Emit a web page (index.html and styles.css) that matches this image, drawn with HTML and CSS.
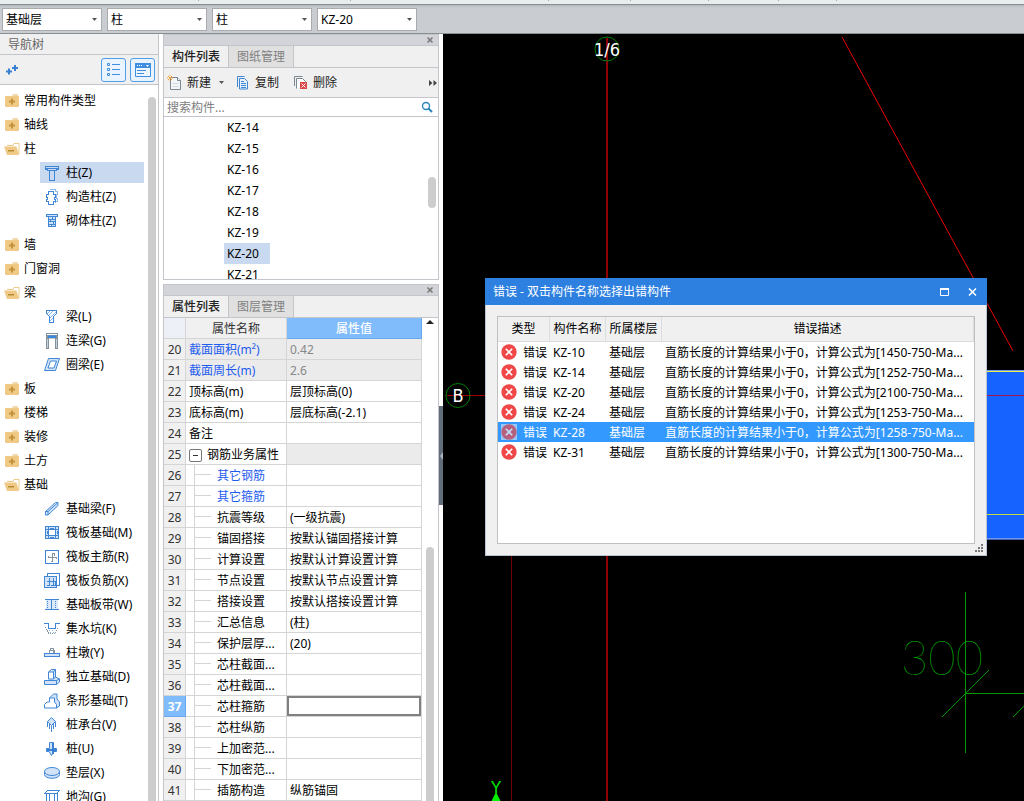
FILE: index.html
```html
<!DOCTYPE html>
<html lang="zh-CN">
<head>
<meta charset="utf-8">
<meta name="viewport" content="width=device-width, initial-scale=1">
<title>构件建模</title>
<link rel="stylesheet" href="styles.css">
</head>
<body>
<svg class="sprite" aria-hidden="true">
  <symbol id="closed" viewBox="0 0 16 16"><path d="M8 3l1-2h5v3H8z" fill="#f3d9a6"/><rect x="1" y="3" width="14" height="11" rx="1" fill="#f0c987"/><path d="M7 5.500h2v2h2v2h-2v2H7v-2H5v-2h2z" fill="#c4933c"/></symbol>
  <symbol id="open" viewBox="0 0 16 16"><path d="M3 4.500h6l1-2h5V13" fill="none" stroke="#f0c987"/><path d="M0 5.500h12.500l2.500 8.500H3z" fill="#f0c987"/><path d="M4 9h6v1.500H4z" fill="#b98a38"/></symbol>
  <symbol id="caret" viewBox="0 0 5 3"><path d="M0 0h5L2.500 3z" fill="#555"/></symbol>
  <symbol id="x" viewBox="0 0 8 8"><path d="M1.500 1.500l5 5M6.500 1.500l-5 5" stroke="#777" stroke-width="1.500"/></symbol>
  <symbol id="error" viewBox="0 0 16 16"><circle cx="8" cy="8" r="7.700" fill="#f04848"/><path d="M4.800 4.800l6.400 6.400M11.200 4.800l-6.400 6.400" stroke="#fff" stroke-width="1.600"/></symbol>
</svg>

<header>
  <svg class="ribbon" aria-hidden="true"><path d="M198.500 0v1M350.500 0v1M548.500 0v1M630.500 0v1M708.500 0v1M778.500 0v1M836.500 0v1" stroke="#a6adb2"/></svg>
  <div class="selectors">
    <label class="combo"><select aria-label="楼层"><option>基础层</option></select><svg><use href="#caret"/></svg></label>
    <label class="combo"><select aria-label="构件分类"><option>柱</option></select><svg><use href="#caret"/></svg></label>
    <label class="combo"><select aria-label="构件类型"><option>柱</option></select><svg><use href="#caret"/></svg></label>
    <label class="combo"><select aria-label="构件名称"><option>KZ-20</option></select><svg><use href="#caret"/></svg></label>
  </div>
</header>

<main class="workspace">
  <nav class="nav" aria-label="导航树">
    <h2>导航树</h2>
    <div class="nav-tools">
      <button class="plain" aria-label="添加"><svg width="14" height="12" viewBox="0 0 14 12"><path d="M3 4.500v6M0 7.500h6M9 1v6M6 4h6" stroke="#3a80d2" stroke-width="2"/></svg></button>
      <button class="view" aria-label="列表视图"><svg width="14" height="14" viewBox="0 0 14 14" fill="none" stroke="#3f8fe0"><path d="M.5.500h2v2h-2zM.5 5.500h2v2h-2zM.5 10.500h2v2h-2zM5 1.500h8M5 6.500h8M5 11.500h8"/></svg></button>
      <button class="view" aria-label="面板视图"><svg width="16" height="14" viewBox="0 0 16 14"><path d="M.5.500h15v13H.500z" fill="#eef6ff" stroke="#3f8fe0"/><path d="M0 0h16v5H0z" fill="#3f8fe0"/><path d="M2 2h1v1H2zM4 2h1v1H4zM6 2h1v1H6zM11 2h3l-1.500 2z" fill="#fff"/><path d="M2 7.500h9M2 10.500h7" stroke="#3f8fe0"/></svg></button>
    </div>
    <div class="tree-wrap">
    <ul class="tree">
      <li><button><svg><use href="#closed"/></svg>常用构件类型</button></li>
      <li><button><svg><use href="#closed"/></svg>轴线</button></li>
      <li><button><svg><use href="#open"/></svg>柱</button>
        <ul>
          <li><button class="selected"><svg viewBox="0 0 16 16"><path d="M1.500 1.500h13v3h-2v1h-9v-1h-2zM1.500 3.500h13M5.500 5.500v10h5v-10" class="l"/></svg>柱(Z)</button></li>
          <li><button><svg viewBox="0 0 16 16"><path d="M6 .5h5.500v2h2v3h-1v4h1v3h-2v1" class="l pale"/><path d="M4.500 2.500h5v3h2v3h-1v2h1v2h-2v3h-5v-3h-2v-2h1v-2h-1v-3h2z" class="l w"/></svg>构造柱(Z)</button></li>
          <li><button><svg viewBox="0 0 16 16"><path d="M2.500 1.500h11v2h-11zM4.500 3.500h7v10h-7zM4.500 6h7M4.500 8.500h7M4.500 11h7M8 3.500V6M6.500 6v2.500M9.500 8.500V11M7 11v2.500" class="l f"/></svg>砌体柱(Z)</button></li>
        </ul></li>
      <li><button><svg><use href="#closed"/></svg>墙</button></li>
      <li><button><svg><use href="#closed"/></svg>门窗洞</button></li>
      <li><button><svg><use href="#open"/></svg>梁</button>
        <ul>
          <li><button><svg viewBox="0 0 16 16"><path d="M2.500 1.500h10v3l-3 3v6h-4v-6l-3-3z" class="l w"/><path d="M3 5l3-3M5 6l4-4M6 9l6-6M6 12l3-3" class="l pale"/></svg>梁(L)</button></li>
          <li><button><svg viewBox="0 0 16 16"><path d="M2 0h12v16h-3V5.500H5V16H2z" fill="#84929e"/><path d="M3 1h10v1H3z" fill="#fff"/><path d="M4 2.500h8v2.500H4z" fill="#3d87da"/><path d="M3.500 6v9M12.500 6v9" stroke="#c8d1d8"/></svg>连梁(G)</button></li>
          <li><button><svg viewBox="0 0 16 16"><path d="M4.500 1.500h11l-4 12H.500zM6.500 4h6l-2.500 7H4z" class="d f" fill-rule="evenodd"/></svg>圈梁(E)</button></li>
        </ul></li>
      <li><button><svg><use href="#closed"/></svg>板</button></li>
      <li><button><svg><use href="#closed"/></svg>楼梯</button></li>
      <li><button><svg><use href="#closed"/></svg>装修</button></li>
      <li><button><svg><use href="#closed"/></svg>土方</button></li>
      <li><button><svg><use href="#open"/></svg>基础</button>
        <ul>
          <li><button><svg viewBox="0 0 16 16"><path d="M1.500 10.500l10-9h2.500v3l-10 9.500H1.500zM1.500 10.500H4V14M4 10.500L13.500 2" class="d f"/></svg>基础梁(F)</button></li>
          <li><button><svg viewBox="0 0 16 16"><path d="M1.500 1.500h13v12h-13z" class="l f"/><path d="M4.500 4.500h7v6h-7z" class="l w"/><path d="M1.500 4.500h3v-3M11.500 1.500v3h3M1.500 10.500h3v3M11.500 13.500v-3h3M3 6v3M13 6v3M6 3h4M6 12h4" class="l"/></svg>筏板基础(M)</button></li>
          <li><button><svg viewBox="0 0 16 16"><path d="M1.500 1.500h13v13h-13z" class="l"/><path d="M8.500 4v9M3.500 8.500h9M8.500 4.500h2v2M8.500 12.500h-2M4 9V7M12.500 8v2" class="g"/></svg>筏板主筋(R)</button></li>
          <li><button><svg viewBox="0 0 16 16"><path d="M3 3V.500h12.500V12H13" class="l"/><path d="M.5 3.500h12v11H.500z" class="l f"/><path d="M5.500 5v7H3M9.500 5v7H7M3 8.500h8.500M11.500 8.500V12H9" class="l"/></svg>筏板负筋(X)</button></li>
          <li><button><svg viewBox="0 0 16 16"><path d="M2 3h12v10H2z" fill="#dce9f9"/><path d="M1 2.500h14M1 12.500h14M7.500 3v9" class="l"/><path d="M3.500 4v8M11.500 4v8" class="l" stroke-dasharray="1 1"/></svg>基础板带(W)</button></li>
          <li><button><svg viewBox="0 0 16 16"><path d="M0 2.500h4.500v5h7v-5H16" class="l"/><path d="M1.500 6l3 6h7l3-6" class="g" stroke-dasharray="1 1"/><path d="M5 9.500h6M6 11.500h4" class="l pale" stroke-dasharray="1 2"/></svg>集水坑(K)</button></li>
          <li><button><svg viewBox="0 0 16 16"><path d="M6.500 5v-1.500h3V8M5.500 8V5.500h5V8" class="g"/><path d="M.5 8.500h15v3H.500z" class="l f"/></svg>柱墩(Y)</button></li>
          <li><button><svg viewBox="0 0 16 16"><path d="M4.500 10V3l3-2.500h4V8l4 2v3l-3 2.500H.500v-4h4M4.500 10h5V3h-5M9.500 3l2-2.500M9.500 10l2-2M.5 11.500h12v4M12.500 11.500l3-1.500" class="d f"/></svg>独立基础(D)</button></li>
          <li><button><svg viewBox="0 0 16 16"><path d="M5.500 5l4-4h3.500v5l2.500 3v4l-3 2" class="d f"/><path d="M5.500 5h5v4l2 2.500v3.500H.500v-3.500L3 9h2.500z" class="d w"/></svg>条形基础(T)</button></li>
          <li><button><svg viewBox="0 0 16 16"><path d="M7.500.500l4 4-4 4-4-4z" class="d f"/><path d="M3.500 5v5M5.500 7v5M7.500 9v6M9.500 7v5M11.500 5v5" class="d"/></svg>桩承台(V)</button></li>
          <li><button><svg viewBox="0 0 16 16"><path d="M5.500 1.500h4v6h3v3H10l-2.500 4-2.500-4H2.500v-3h3z" class="d f"/><path d="M9 2v11M3 9h9" stroke="#3a80d2" stroke-width="2"/></svg>桩(U)</button></li>
          <li><button><svg viewBox="0 0 16 16"><path d="M.5 6.500v3c0 5 15 5 15 0v-3" class="d f"/><ellipse cx="8" cy="6.500" rx="7.500" ry="4" class="d f"/></svg>垫层(X)</button></li>
          <li><button><svg viewBox="0 0 16 16"><path d="M3.500 1.500h12l-3 3H.500zM2.500 4.500v10h3v-10M10.500 4.500v10h3v-11" class="l w"/></svg>地沟(G)</button></li>
        </ul></li>
    </ul>
    <div class="thumb tree-thumb"></div>
    </div>
  </nav>

  <div class="docks">
    <section class="panel list-panel">
      <div class="grip"><button aria-label="关闭"><svg><use href="#x"/></svg></button></div>
      <div class="tabs" role="tablist"><button role="tab" aria-selected="true">构件列表</button><button role="tab" aria-selected="false">图纸管理</button></div>
      <div class="tools">
        <button class="new"><svg width="16" height="16" viewBox="0 0 16 16"><path d="M3.500 2.500h7l3 3v9h-10z" fill="#f4f6f8" stroke="#7b8791"/><path d="M10.500 2.500v3h3" fill="#fff" stroke="#7b8791"/><path d="M5.500 8.500h6M5.500 11.500h6" stroke="#d5dade"/><path d="M1 1l4 4M5 1L1 5M3 0v1M0 3h1M5 3h1M3 5v1" stroke="#f0a030"/></svg>新建<svg class="caret"><use href="#caret"/></svg></button>
        <button class="copy"><svg width="16" height="16" viewBox="0 0 16 16"><path d="M2.500 12V1.500h7" fill="none" stroke="#3f87d6"/><path d="M4.500 3.500h5l3 3v7.500h-8z" fill="#eaf3fd" stroke="#3f87d6"/><path d="M6 6.500h3M6 8.500h5M6 10.500h5M6 12.500h5" stroke="#3f87d6"/></svg>复制</button>
        <button class="delete"><svg width="16" height="16" viewBox="0 0 16 16"><path d="M1.500 11V1.500h8" fill="none" stroke="#7b8791"/><path d="M3.500 13.500v-10h6l3 3v4" fill="#fff" stroke="#7b8791"/><path d="M7 7h7v7H7z" fill="#d94848"/><path d="M8.500 8.500l4 4M12.500 8.500l-4 4" stroke="#fff"/></svg>删除</button>
        <button class="more" aria-label="更多"><svg width="8" height="6" viewBox="0 0 8 6"><path d="M0 0l3.500 3L0 6zM4.500 0L8 3 4.500 6z" fill="#444"/></svg></button>
      </div>
      <div class="search"><input type="search" aria-label="搜索构件" placeholder="搜索构件..."><svg width="12" height="12" viewBox="0 0 12 12"><circle cx="5" cy="5" r="3.500" fill="none" stroke="#2a86c2" stroke-width="1.400"/><path d="M7.500 7.500l3.500 3.500" stroke="#2a86c2" stroke-width="2"/></svg></div>
      <div class="list-wrap">
        <ul class="components">
          <li>KZ-14</li><li>KZ-15</li><li>KZ-16</li><li>KZ-17</li><li>KZ-18</li><li>KZ-19</li><li class="selected">KZ-20</li><li>KZ-21</li>
        </ul>
        <div class="thumb list-thumb"></div>
      </div>
    </section>

    <section class="panel prop-panel">
      <div class="grip"><button aria-label="关闭"><svg><use href="#x"/></svg></button></div>
      <div class="tabs" role="tablist"><button role="tab" aria-selected="true">属性列表</button><button role="tab" aria-selected="false">图层管理</button></div>
      <div class="prop-wrap">
        <table class="props">
          <colgroup><col class="c-no"><col class="c-name"><col></colgroup>
          <thead><tr><th></th><th>属性名称</th><th class="active">属性值</th></tr></thead>
          <tbody>
            <tr class="ro blue"><th>20</th><td>截面面积(m²)</td><td>0.42</td></tr>
            <tr class="ro blue"><th>21</th><td>截面周长(m)</td><td>2.6</td></tr>
            <tr><th>22</th><td>顶标高(m)</td><td>层顶标高(0)</td></tr>
            <tr><th>23</th><td>底标高(m)</td><td>层底标高(-2.1)</td></tr>
            <tr><th>24</th><td>备注</td><td></td></tr>
            <tr class="group"><th>25</th><td><button aria-label="折叠" aria-expanded="true"></button>钢筋业务属性</td><td></td></tr>
            <tr class="sub blue"><th>26</th><td>其它钢筋</td><td></td></tr>
            <tr class="sub blue"><th>27</th><td>其它箍筋</td><td></td></tr>
            <tr class="sub"><th>28</th><td>抗震等级</td><td>(一级抗震)</td></tr>
            <tr class="sub"><th>29</th><td>锚固搭接</td><td>按默认锚固搭接计算</td></tr>
            <tr class="sub"><th>30</th><td>计算设置</td><td>按默认计算设置计算</td></tr>
            <tr class="sub"><th>31</th><td>节点设置</td><td>按默认节点设置计算</td></tr>
            <tr class="sub"><th>32</th><td>搭接设置</td><td>按默认搭接设置计算</td></tr>
            <tr class="sub"><th>33</th><td>汇总信息</td><td>(柱)</td></tr>
            <tr class="sub"><th>34</th><td>保护层厚...</td><td>(20)</td></tr>
            <tr class="sub"><th>35</th><td>芯柱截面...</td><td></td></tr>
            <tr class="sub"><th>36</th><td>芯柱截面...</td><td></td></tr>
            <tr class="sub"><th class="current">37</th><td>芯柱箍筋</td><td class="edit"><input type="text" aria-label="芯柱箍筋"></td></tr>
            <tr class="sub"><th>38</th><td>芯柱纵筋</td><td></td></tr>
            <tr class="sub"><th>39</th><td>上加密范...</td><td></td></tr>
            <tr class="sub"><th>40</th><td>下加密范...</td><td></td></tr>
            <tr class="sub"><th>41</th><td>插筋构造</td><td>纵筋锚固</td></tr>
          </tbody>
        </table>
        <div class="prop-scroll"><svg width="8" height="5" viewBox="0 0 8 5"><path d="M0 5l4-4 4 4z" fill="#222"/></svg><div class="thumb"></div></div>
      </div>
    </section>
  </div>

  <div class="splitter"><button aria-label="收起面板"><svg width="4" height="8" viewBox="0 0 4 8"><path d="M4 0v8L1 4z" fill="#aab2bc"/></svg></button></div>

  <section class="canvas" aria-label="绘图区">
    <svg class="drawing">
      <g transform="translate(-443 -34)" fill="none">
        <path d="M607 38v3000" stroke="#900000" stroke-width="2"/>
        <path d="M511.500 500v3000" stroke="#700000"/>
        <path d="M447 395.500h60" stroke="#a00000"/>
        <path d="M842 37l171 314" stroke="#f00000"/>
        <rect x="900" y="370" width="3000" height="170" fill="#1763ff"/>
        <path d="M900 370.500h3000M900 538.500h3000" stroke="#6f93e8"/>
        <path d="M900 539.500h3000" stroke="#4564b8"/>
        <path d="M900 371.500h3000" stroke="#f0f040"/>
        <path d="M900 395.500h3000" stroke="#a0184c"/>
        <path d="M900 514.500h3000" stroke="#c8d840"/>
        <circle cx="607" cy="49" r="12" stroke="#008000"/>
        <circle cx="458" cy="395.500" r="12" stroke="#008000"/>
        <path d="M965.500 592v161M965.500 693.500h3000M942 717l47-47M1013 717l47-47" stroke="#009a00"/>
        <text class="axis" x="607" y="56">1/6</text>
        <text class="axis" x="458" y="402">B</text>
        <text class="dim" x="942" y="675">300</text>
        <text class="ucs" x="496" y="793">Y</text>
        <path d="M496 792l5 10h-10z" fill="#00f000"/>
      </g>
    </svg>

    <div class="dialog" role="dialog" aria-labelledby="dlg-title">
      <div class="titlebar"><h1 id="dlg-title">错误 - 双击构件名称选择出错构件</h1>
        <button aria-label="最大化"><svg width="9" height="8" viewBox="0 0 9 8"><path d="M.5 1h8v6.500h-8z" fill="none" stroke="#fff"/><path d="M0 1h9" stroke="#fff" stroke-width="2"/></svg></button>
        <button aria-label="关闭"><svg width="9" height="8" viewBox="0 0 9 8"><path d="M1 .5l7 7M8 .5l-7 7" stroke="#fff" stroke-width="1.500"/></svg></button></div>
      <div class="dialog-body">
        <div class="grid-box">
        <table class="errors">
          <colgroup><col class="e-type"><col class="e-name"><col class="e-name"><col></colgroup>
          <thead><tr><th>类型</th><th>构件名称</th><th>所属楼层</th><th>错误描述</th></tr></thead>
          <tbody>
            <tr><td><svg><use href="#error"/></svg>错误</td><td>KZ-10</td><td>基础层</td><td>直筋长度的计算结果小于0，计算公式为[1450-750-Ma...</td></tr>
            <tr><td><svg><use href="#error"/></svg>错误</td><td>KZ-14</td><td>基础层</td><td>直筋长度的计算结果小于0，计算公式为[1252-750-Ma...</td></tr>
            <tr><td><svg><use href="#error"/></svg>错误</td><td>KZ-20</td><td>基础层</td><td>直筋长度的计算结果小于0，计算公式为[2100-750-Ma...</td></tr>
            <tr><td><svg><use href="#error"/></svg>错误</td><td>KZ-24</td><td>基础层</td><td>直筋长度的计算结果小于0，计算公式为[1253-750-Ma...</td></tr>
            <tr class="selected"><td><svg><use href="#error"/></svg>错误</td><td>KZ-28</td><td>基础层</td><td>直筋长度的计算结果小于0，计算公式为[1258-750-Ma...</td></tr>
            <tr><td><svg><use href="#error"/></svg>错误</td><td>KZ-31</td><td>基础层</td><td>直筋长度的计算结果小于0，计算公式为[1300-750-Ma...</td></tr>
          </tbody>
        </table>
        </div>
      </div>
      <svg class="resize" width="8" height="8" viewBox="0 0 8 8"><path d="M6 0h2v2H6zM3 3h2v2H3zM6 3h2v2H6zM0 6h2v2H0zM3 6h2v2H3zM6 6h2v2H6z" fill="#777"/></svg>
    </div>
  </section>
</main>
</body>
</html>
```
FILE: styles.css
```css
* { box-sizing: border-box; }
body {
  margin: 0;
  height: 100vh;
  display: flex;
  flex-direction: column;
  overflow: hidden;
  background: #fff;
  color: #000;
  font: 12px/20px "Noto Sans", "Noto Sans CJK SC", sans-serif;
}
button, input, select { font: inherit; color: inherit; margin: 0; padding: 0; border: 0; background: none; border-radius: 0; }
button { display: inline-flex; align-items: center; white-space: nowrap; }
ul { list-style: none; margin: 0; padding: 0; }
h1, h2 { margin: 0; font-size: 12px; font-weight: 400; }
svg { flex: none; display: block; }
table { border-collapse: separate; border-spacing: 0; table-layout: fixed; width: 100%; }
.sprite { position: absolute; width: 0; height: 0; }

.ribbon { width: 100%; height: 4px; background: #e8eded; }
.selectors {
  display: flex;
  gap: 5px;
  padding: 3px 2px 2px;
  height: 30px;
  background: linear-gradient(#b4b9be, #c9cdd1 3px);
  border-top: 1px solid #858d93;
  border-bottom: 1px solid #87908f;
}
.combo { display: grid; width: 100px; height: 23px; background: #fff; border: 1px solid #a9abad; }
.combo select, .combo svg { grid-area: 1 / 1; }
.combo select { appearance: none; padding-left: 3px; outline: none; }
.combo svg { width: 5px; height: 3px; align-self: center; justify-self: end; margin-right: 4px; pointer-events: none; }

.workspace { flex: 1; min-height: 0; display: flex; }

.nav { width: 159px; flex: none; display: flex; flex-direction: column; border-right: 1px solid #c3c5cb; }
.nav h2 { height: 21px; padding: 2px 0 0 8px; line-height: 18px; background: #f0f0f0; border-bottom: 1px solid #c3c5cb; color: #666; }
.nav-tools { display: flex; align-items: center; gap: 4px; height: 30px; padding: 0 3px 0 6px; background: #f0f0f0; border-bottom: 1px solid #c3c5cb; }
.plain { margin-right: auto; }
.view { width: 25px; height: 24px; justify-content: center; border: 1px solid #4f9ee8; border-radius: 3px; background: #eaf4ff; }
.tree-wrap { flex: 1; min-height: 0; display: flex; overflow: hidden; }
.tree { flex: 1; padding-top: 3px; }
.tree li > button { display: flex; height: 24px; padding: 1px 0 0 4px; gap: 4px; }
.tree svg { width: 16px; height: 16px; }
.tree ul button { width: 104px; gap: 6px; }
.tree ul { padding-left: 40px; }
.tree ul .selected { background: linear-gradient(#c9d9f0, #c9d9f0) 0 2px / 100% 21px no-repeat; }
.l, .d, .g { fill: none; stroke: #3f87d6; }
.l, .g { shape-rendering: crispEdges; }
.g { stroke: #8896a2; }
.pale { stroke: #8bb9ec; }
.f { fill: #d3e3f7; }
.w { fill: #fff; }
.thumb { width: 8px; flex: none; background: #cdcdcd; border-radius: 4px; }
.tree-thumb { margin: 12px 2px 0 4px; border-radius: 4px 4px 0 0; }

.docks { width: 276px; flex: none; margin-left: 4px; display: flex; flex-direction: column; gap: 4px; }
.panel { border: 1px solid #c3c5cb; display: flex; flex-direction: column; }
.list-panel { height: 246px; flex: none; }
.prop-panel { flex: 1; min-height: 0; border-bottom: 0; }
.grip { height: 11px; flex: none; display: flex; justify-content: flex-end; align-items: center; padding-right: 4px; background: #d2d4d9; border-bottom: 1px solid #c3c5cb; }
.grip svg { width: 8px; height: 8px; }
.tabs { height: 22px; flex: none; display: flex; background: #f0f0f0; border-bottom: 1px solid #c3c5cb; }
.tabs button { width: 65px; justify-content: center; border-right: 1px solid #c3c5cb; color: #808080; background: #e0e0e0; }
.tabs [aria-selected="true"] { background: #f0f0f0; color: #222; font-weight: 500; }
.tools { height: 30px; flex: none; display: flex; align-items: center; padding: 0 1px 0 3px; background: #f0f0f0; border-bottom: 1px solid #c3c5cb; color: #222; }
.tools button { gap: 4px; }
.tools .caret { width: 5px; height: 3px; margin-left: 4px; }
.copy { margin-left: 11px; }
.delete { margin-left: 14px; }
.tools .more { margin-left: auto; }
.search { height: 19px; flex: none; display: flex; align-items: center; padding: 0 5px 0 3px; border-bottom: 1px solid #c3c5cb; }
.search input { flex: 1; min-width: 0; height: 18px; padding-top: 2px; outline: none; appearance: none; }
.search input::placeholder { color: #808080; opacity: 1; }
.list-wrap { flex: 1; min-height: 0; display: flex; justify-content: space-between; overflow: hidden; }
.components { padding-left: 60px; }
.components li { height: 21px; line-height: 21px; width: 46px; padding-left: 3px; }
.components .selected { background: #c9d9f0; }
.list-thumb { height: 31px; margin: 60px 2px 0 0; }

.prop-wrap { flex: 1; min-height: 0; display: flex; overflow: hidden; }
.props { width: auto; flex: 1; align-self: flex-start; }
.c-no { width: 22px; }
.c-name { width: 101px; }
.props th, .props td { height: 21px; line-height: 18px; padding: 2px 3px 0; border: solid #d5d5d5; border-width: 0 1px 1px 0; font-weight: 400; text-align: left; white-space: nowrap; overflow: hidden; }
.props tbody th { padding: 2px 0 0; text-align: center; background: #f0f0f0; color: #333; }
.props thead th { background: #f0f0f0; text-align: center; color: #333; }
.props thead th:first-child { background: #edf1f7; }
.props thead .active { background: #80bbfb; color: #fff; border-color: #69a8ee; font-weight: 500; }
.props .ro td, .props .group td:last-child { background: #ebebeb; }
.props .ro td:last-child { color: #888; }
.props .blue td:nth-child(2) { color: #1e5cf0; }
.props .sub td:nth-child(2) {
  padding-left: 31px;
  background:
    linear-gradient(#d5d5d5, #d5d5d5) 8px 0 / 1px 100% no-repeat,
    linear-gradient(#d5d5d5, #d5d5d5) 8px 9px / 17px 1px no-repeat;
}
.group button { width: 13px; height: 13px; margin: 0 5px 0 0; border: 1px solid #777; border-radius: 2px; vertical-align: -2px; background: linear-gradient(#333, #333) center / 5px 1px no-repeat #fff; }
.props tbody .current { background: #80bbfb; color: #fff; font-weight: 700; border-color: #69a8ee; }
.props .edit { padding: 0; }
.edit input { display: block; width: 100%; height: 20px; padding: 0 3px; border: 2px solid #808080; outline: none; }
.prop-scroll { width: 16px; flex: none; display: flex; flex-direction: column; align-items: center; padding-top: 1px; }
.prop-scroll .thumb { flex: 1; margin-top: 223px; border-radius: 4px 4px 0 0; }

.splitter { width: 4px; flex: none; padding-top: 372px; }
.splitter button { width: 4px; height: 99px; background: #616d7b; }

.canvas { flex: 1; min-width: 0; position: relative; overflow: hidden; background: #000; }
.drawing { width: 100%; height: 100%; }
.axis { fill: #fff; font: 18px "DejaVu Sans Condensed", "DejaVu Sans", sans-serif; text-anchor: middle; }
.dim { fill: #00c800; font: 100 47px Lato, sans-serif; text-anchor: middle; }
.ucs { fill: #00f000; font: 16px "Liberation Sans", sans-serif; text-anchor: middle; }

.dialog { position: absolute; left: 42px; top: 244px; width: 502px; height: 278px; display: flex; flex-direction: column; background: #f0f0f0; border: 1px solid #b8c4d0; border-top: 0; }
.titlebar { display: flex; align-items: center; gap: 19px; height: 27px; flex: none; margin: 0 -1px; padding: 0 10px 0 8px; background: #2d7fe0; color: #fff; }
.titlebar h1 { flex: 1; }
.dialog-body { flex: 1; display: flex; padding: 11px; }
.grid-box { flex: 1; border: 1px solid #c0c0c0; background: #fff; }
.e-type { width: 52px; }
.e-name { width: 56px; }
.errors th { height: 25px; padding: 0; font-weight: 400; background: #f0f0f0; border-right: 1px solid #dcdcdc; border-bottom: 1px solid #dcdcdc; }
.errors td { height: 20px; line-height: 18px; padding: 2px 0 0 3px; white-space: nowrap; overflow: hidden; }
.errors svg { display: inline-block; width: 16px; height: 16px; margin-right: 6px; vertical-align: -3px; }
.errors .selected { background: #3399ff; color: #fff; }
.errors .selected svg { background: #c4dcf8; opacity: .7; }
.resize { position: absolute; right: 3px; bottom: 3px; }
```
